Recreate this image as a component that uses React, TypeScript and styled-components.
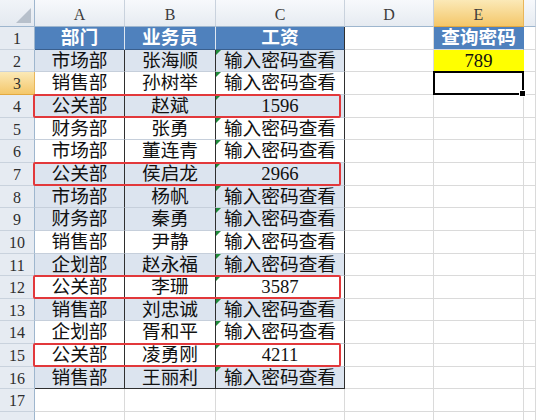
import React from "react";
import styled, { createGlobalStyle, css } from "styled-components";

const GlobalStyle = createGlobalStyle`
  html, body { margin: 0; padding: 0; background: #ffffff; overflow: hidden; }
  #root { width: 536px; height: 420px; }
`;

const FONT = `"Liberation Serif", "Noto Sans CJK SC", serif`;

const ROW_COUNT = 18;
const rowHeights = Array.from({ length: ROW_COUNT }, (_, i) =>
  Math.round(27 + (i + 1) * 22.65) - Math.round(27 + i * 22.65)
);
const ROW_TEMPLATE = `27px ${rowHeights.map((h) => `${h}px`).join(" ")}`;

const Sheet = styled.div`
  display: grid;
  grid-template-columns: 35px 90px 91px 129px 89px 90px 1fr;
  grid-template-rows: ${ROW_TEMPLATE};
  width: 536px;
  height: 420px;
  overflow: hidden;
  font-family: ${FONT};
  background: #ffffff;
`;

type Pos = { $r: number; $c: number };

const placed = css<Pos>`
  grid-row: ${(p) => p.$r};
  grid-column: ${(p) => p.$c};
`;

const Corner = styled.div`
  grid-row: 1;
  grid-column: 1;
  box-sizing: border-box;
  background: linear-gradient(#f1f4f8, #e4e9f0);
  border-right: 1px solid #9eb6ce;
  border-bottom: 1px solid #9eb6ce;
  display: flex;
  align-items: flex-end;
  justify-content: flex-end;
  padding: 0 3px 3px 0;
`;

const activeHead = css`
  background: linear-gradient(#fbe9b7, #f4c76a);
  border-right-color: #e9b65a;
  border-bottom-color: #e3a940;
`;

const ColHeader = styled.div<Pos & { $active?: boolean }>`
  ${placed};
  box-sizing: border-box;
  background: linear-gradient(#f7f9fc, #e6ebf1);
  border-right: 1px solid #c9d2dd;
  border-bottom: 1px solid #9eb6ce;
  display: flex;
  align-items: center;
  justify-content: center;
  padding-top: 4px;
  font-size: 16px;
  color: #3c3c3c;
  ${(p) => p.$active && activeHead};
`;

const RowHeader = styled.div<Pos & { $active?: boolean }>`
  ${placed};
  box-sizing: border-box;
  background: #e6ebf2;
  border-right: 1px solid #9eb6ce;
  border-bottom: 1px solid #c9d2dd;
  display: flex;
  align-items: center;
  justify-content: center;
  padding-top: 2px;
  font-size: 16px;
  color: #2e2e2e;
  ${(p) => p.$active && activeHead};
`;

type Kind = "plain" | "head" | "headEnd" | "band" | "white" | "yellow" | "query";

const Cell = styled.div<Pos & { $kind: Kind; $last?: boolean }>`
  ${placed};
  position: relative;
  box-sizing: border-box;
  display: flex;
  align-items: center;
  justify-content: center;
  padding-top: 1px;
  font-size: 18.7px;
  line-height: 1;
  color: #111111;
  white-space: nowrap;
  background: #ffffff;
  border-right: 1px solid #dadada;
  border-bottom: 1px solid #dadada;

  ${(p) =>
    (p.$kind === "head" || p.$kind === "headEnd" || p.$kind === "query") &&
    css`
      background: #4f81bd;
      color: #ffffff;
      font-weight: 700;
      border-right-color: ${p.$kind === "head" ? "#dfe7f1" : p.$kind === "headEnd" ? "#2f2f2f" : "#4f81bd"};
      border-bottom-color: ${p.$kind === "query" ? "#dadada" : "#3a5f8e"};
    `}

  ${(p) =>
    (p.$kind === "band" || p.$kind === "white") &&
    css`
      background: ${p.$kind === "band" ? "#dce4ef" : "#ffffff"};
      border-right-color: #2f2f2f;
      border-bottom-color: ${p.$last ? "#2f2f2f" : "#c6cfdb"};
    `}

  ${(p) =>
    p.$kind === "yellow" &&
    css`
      background: #ffff00;
      border-right-color: #ffff00;
    `}
`;

const TextMark = styled.span`
  position: absolute;
  top: 0;
  left: 0;
  width: 0;
  height: 0;
  border-top: 5px solid #1f8a3a;
  border-right: 5px solid transparent;
`;

const Highlight = styled.div<{ $r: number }>`
  grid-row: ${(p) => p.$r};
  grid-column: 2 / 5;
  margin: -1px 4px 0 -2px;
  border: 2px solid #e2383b;
  border-radius: 2px;
  pointer-events: none;
  z-index: 2;
`;

const Selection = styled.div<Pos>`
  ${placed};
  position: relative;
  margin: -1px 0 0 -1px;
  border: 2px solid #000000;
  pointer-events: none;
  z-index: 3;
`;

const FillHandle = styled.span`
  position: absolute;
  right: -4px;
  bottom: -4px;
  width: 5px;
  height: 5px;
  background: #000000;
  border: 1px solid #ffffff;
`;

type Row = { dept: string; name: string; pay: string; band: boolean; mark?: boolean };

const rows: Row[] = [
  { dept: "市场部", name: "张海顺", pay: "输入密码查看", band: true },
  { dept: "销售部", name: "孙树举", pay: "输入密码查看", band: false },
  { dept: "公关部", name: "赵斌", pay: "1596", band: true, mark: true },
  { dept: "财务部", name: "张勇", pay: "输入密码查看", band: false },
  { dept: "市场部", name: "董连青", pay: "输入密码查看", band: false },
  { dept: "公关部", name: "侯启龙", pay: "2966", band: true, mark: true },
  { dept: "市场部", name: "杨帆", pay: "输入密码查看", band: true },
  { dept: "财务部", name: "秦勇", pay: "输入密码查看", band: true },
  { dept: "销售部", name: "尹静", pay: "输入密码查看", band: false },
  { dept: "企划部", name: "赵永福", pay: "输入密码查看", band: true },
  { dept: "公关部", name: "李珊", pay: "3587", band: false, mark: true },
  { dept: "销售部", name: "刘忠诚", pay: "输入密码查看", band: true },
  { dept: "企划部", name: "胥和平", pay: "输入密码查看", band: false },
  { dept: "公关部", name: "凌勇刚", pay: "4211", band: false, mark: true },
  { dept: "销售部", name: "王丽利", pay: "输入密码查看", band: true },
];

const letters = ["A", "B", "C", "D", "E", ""];

export default function App() {
  const cells: React.ReactNode[] = [];

  letters.forEach((l, i) => {
    cells.push(
      <ColHeader key={`ch${i}`} $r={1} $c={i + 2} $active={l === "E"}>
        {l}
      </ColHeader>
    );
  });

  for (let r = 1; r <= ROW_COUNT; r++) {
    const gr = r + 1;
    cells.push(
      <RowHeader key={`rh${r}`} $r={gr} $c={1} $active={r === 3}>
        {r <= 17 ? r : ""}
      </RowHeader>
    );

    if (r === 1) {
      cells.push(<Cell key="a1" $r={gr} $c={2} $kind="head">部门</Cell>);
      cells.push(<Cell key="b1" $r={gr} $c={3} $kind="head">业务员</Cell>);
      cells.push(<Cell key="c1" $r={gr} $c={4} $kind="headEnd">工资</Cell>);
    } else if (r <= 16) {
      const d = rows[r - 2];
      const kind: Kind = d.band ? "band" : "white";
      const last = r === 16;
      cells.push(<Cell key={`a${r}`} $r={gr} $c={2} $kind={kind} $last={last}>{d.dept}</Cell>);
      cells.push(<Cell key={`b${r}`} $r={gr} $c={3} $kind={kind} $last={last}>{d.name}</Cell>);
      cells.push(
        <Cell key={`c${r}`} $r={gr} $c={4} $kind={kind} $last={last}>
          <TextMark />
          {d.pay}
        </Cell>
      );
    } else {
      cells.push(<Cell key={`a${r}`} $r={gr} $c={2} $kind="plain" />);
      cells.push(<Cell key={`b${r}`} $r={gr} $c={3} $kind="plain" />);
      cells.push(<Cell key={`c${r}`} $r={gr} $c={4} $kind="plain" />);
    }

    cells.push(<Cell key={`d${r}`} $r={gr} $c={5} $kind="plain" />);

    if (r === 1) {
      cells.push(<Cell key="e1" $r={gr} $c={6} $kind="query">查询密码</Cell>);
    } else if (r === 2) {
      cells.push(<Cell key="e2" $r={gr} $c={6} $kind="yellow">789</Cell>);
    } else {
      cells.push(<Cell key={`e${r}`} $r={gr} $c={6} $kind="plain" />);
    }

    cells.push(<Cell key={`f${r}`} $r={gr} $c={7} $kind="plain" />);
  }

  return (
    <>
      <GlobalStyle />
      <Sheet>
        <Corner>
          <svg width="15" height="15" viewBox="0 0 15 15">
            <polygon points="15,0 15,15 0,15" fill="#b7c0cb" />
          </svg>
        </Corner>
        {cells}
        {rows.map((d, i) =>
          d.mark ? <Highlight key={`hl${i}`} $r={i + 3} /> : null
        )}
        <Selection $r={4} $c={6}>
          <FillHandle />
        </Selection>
      </Sheet>
    </>
  );
}
